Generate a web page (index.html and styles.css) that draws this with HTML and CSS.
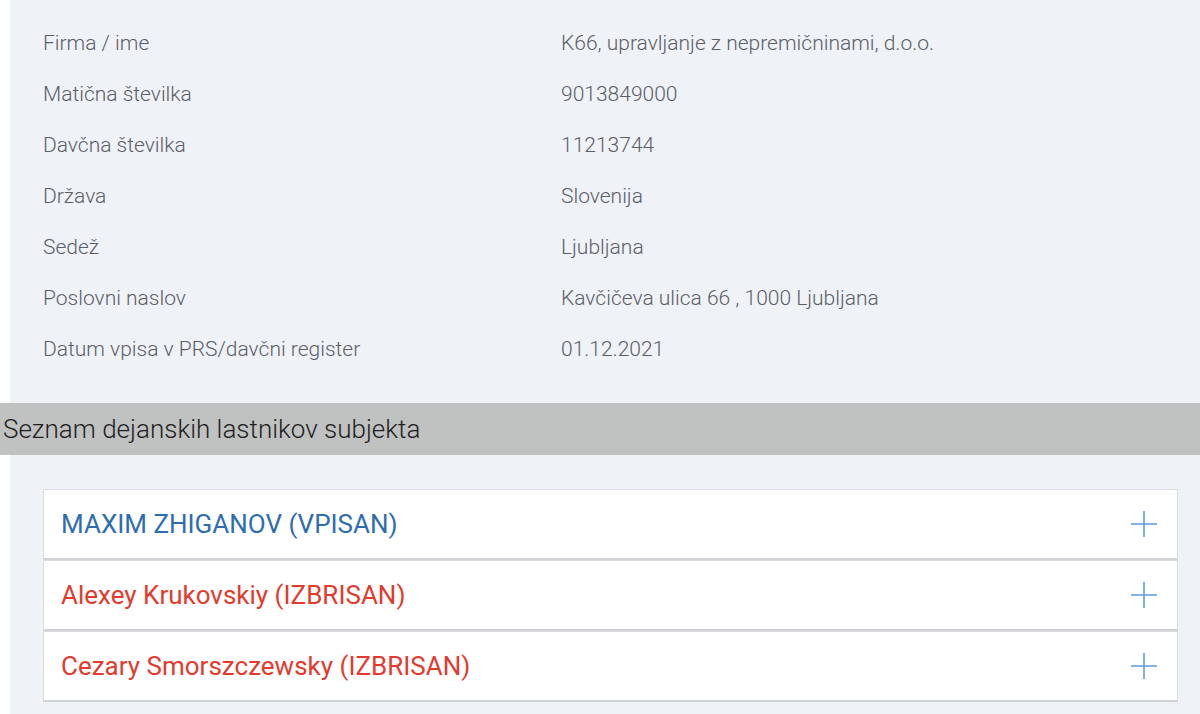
FILE: index.html
```html
<!DOCTYPE html>
<html lang="sl">
<head>
<meta charset="utf-8">
<title>Podatki o subjektu</title>
<link rel="stylesheet" href="styles.css">
</head>
<body>
<div class="page">
  <section class="info">
    <div class="row"><div class="label">Firma / ime</div><div class="value">K66, upravljanje z nepremičninami, d.o.o.</div></div>
    <div class="row"><div class="label">Matična številka</div><div class="value">9013849000</div></div>
    <div class="row"><div class="label">Davčna številka</div><div class="value">11213744</div></div>
    <div class="row"><div class="label">Država</div><div class="value">Slovenija</div></div>
    <div class="row"><div class="label">Sedež</div><div class="value">Ljubljana</div></div>
    <div class="row"><div class="label">Poslovni naslov</div><div class="value">Kavčičeva ulica 66 , 1000 Ljubljana</div></div>
    <div class="row"><div class="label">Datum vpisa v PRS/davčni register</div><div class="value">01.12.2021</div></div>
  </section>
  <h2 class="bar">Seznam dejanskih lastnikov subjekta</h2>
  <section class="owners">
    <div class="item">
      <span class="name active">MAXIM ZHIGANOV (VPISAN)</span>
      <svg class="plus" width="28" height="28" viewBox="0 0 28 28"><path d="M1 14H27M14 1V27" stroke="#5e9cd8" stroke-width="1.6" fill="none"/></svg>
    </div>
    <div class="item">
      <span class="name deleted">Alexey Krukovskiy (IZBRISAN)</span>
      <svg class="plus" width="28" height="28" viewBox="0 0 28 28"><path d="M1 14H27M14 1V27" stroke="#5e9cd8" stroke-width="1.6" fill="none"/></svg>
    </div>
    <div class="item">
      <span class="name deleted">Cezary Smorszczewsky (IZBRISAN)</span>
      <svg class="plus" width="28" height="28" viewBox="0 0 28 28"><path d="M1 14H27M14 1V27" stroke="#5e9cd8" stroke-width="1.6" fill="none"/></svg>
    </div>
  </section>
</div>
</body>
</html>
```
FILE: styles.css
```css
html, body {
  margin: 0;
  padding: 0;
  background: #ffffff;
}
body {
  font-family: Roboto, "Liberation Sans", Arial, sans-serif;
  width: 1200px;
  height: 714px;
  overflow: hidden;
}
.page {
  display: flex;
  flex-direction: column;
}
.info {
  margin-left: 10px;
  background: #eff2f7;
  padding: 17px 0 29px 33px;
}
.row {
  display: flex;
  height: 51px;
  align-items: center;
  font-size: 21px;
  font-weight: 300;
  color: #5b6067;
}
.label {
  width: 518px;
}
.bar {
  margin: 0;
  height: 52px;
  display: flex;
  align-items: center;
  padding-left: 3px;
  background: #c0c1c1;
  color: #1f1f1f;
  font-size: 26px;
  font-weight: 300;
}
.owners {
  margin-left: 10px;
  background: #eff2f7;
  padding: 34px 22px 15px 33px;
  display: flex;
  flex-direction: column;
}
.item {
  display: flex;
  align-items: center;
  justify-content: space-between;
  height: 68px;
  background: #ffffff;
  border: 1px solid #dadcdf;
  border-bottom: 2px solid #d0d2d5;
  padding: 0 19px 0 17px;
}
.name {
  font-size: 26px;
  font-weight: 400;
}
.name.active {
  color: #2e6db0;
}
.name.deleted {
  color: #e23b2e;
}
.plus {
  display: block;
}
```
